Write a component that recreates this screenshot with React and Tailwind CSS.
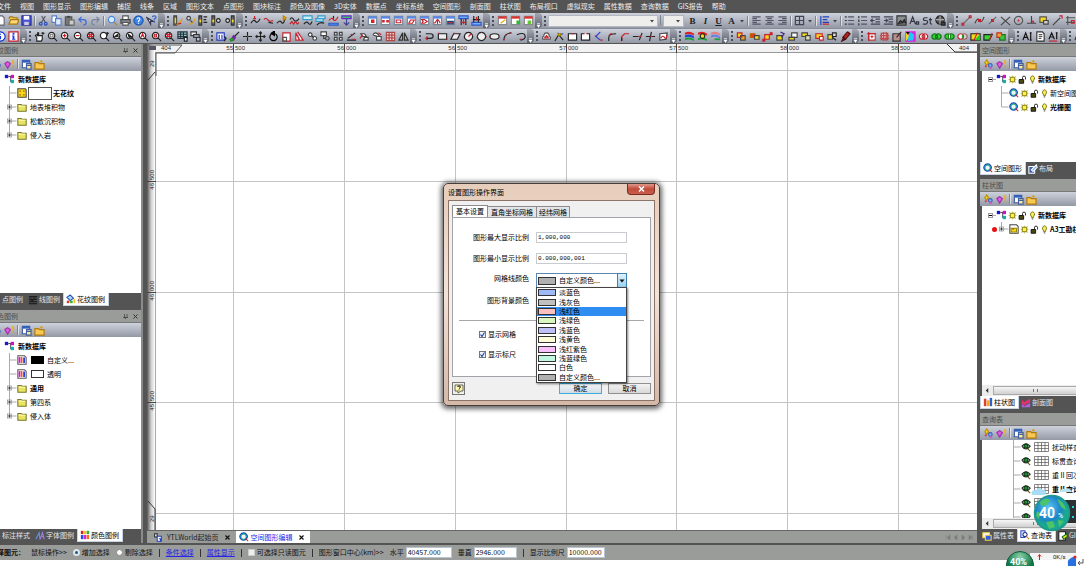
import React, { useState } from 'react';

// Each glyph is a list of [path, stroke, fill] on a 12x12 grid
const K = '#222';
const R = '#c8202c';
const G = '#1f9a2c';
const B = '#2f55c8';
const Y = '#f4d81c';
const N = 'none';

const LENS = 'M5 1.5a3.5 3.5 0 1 0 .01 0M7.6 7.6L11 11';
const WIN = 'M1.5 1.5h9v9h-9z';
const WINBAR = 'M1.5 1.5h9v2.5h-9z';

const GLYPHS = {
  newDoc: [['M2 1h6l2 2v8H2z', '#667', '#fff']],
  open: [['M1 4l1-2h3l1 1h4v3', '#a07818', '#f6c64a'], ['M1 10l2-5h9l-2 5z', '#a07818', '#ffd970']],
  save: [['M1 1h10v10H1z', '#2a2f9c', '#4b55d8'], ['M3 1h6v4H3z', N, '#fff'], ['M3.5 7.5h5V11h-5z', N, '#ccd']],
  cut: [['M4 1l4 7M8 1L4 8', '#556', N], ['M3 8a1.5 1.5 0 1 0 .01 0M8.5 8a1.5 1.5 0 1 0 .01 0', '#2a4fc0', N]],
  copy: [['M1 1h5v7H1z', '#5a7fc0', '#fff'], ['M5 4h6v7H5z', '#5a7fc0', '#dfeaff']],
  paste: [['M1.5 2h7v9h-7z', '#555', '#777'], ['M3.5 1h3v2h-3z', N, '#444'], ['M5.5 5.5h5.500v5.500h-5.500z', '#666', '#ccc']],
  undo: [['M2 5h5q3 0 3 3t-3 3M5 2L2 5l3 3', '#3a68d8', N]],
  redo: [['M10 5H5Q2 5 2 8t3 3M7 2l3 3-3 3', '#7a839a', N]],
  find: [['M5 1.5a3.5 3.5 0 1 0 .01 0', '#4a86d8', '#d8ecff'], ['M8 8l3 3', '#b08030', N]],
  print: [['M3 1h6v4H3z', '#555', '#fff'], ['M1 5h10v4H1z', '#444', '#8a8f98'], ['M3 8h6v3H3z', '#555', '#fff']],
  help: [['M6 1a5 5 0 1 0 .01 0', '#1f55b0', '#3a86e8'], ['M4.500 4.500q0-1.500 1.500-1.500t1.500 1.500q0 1-1.500 2v1M6 8.500v1', '#fff', N]],
  what: [['M1 3l4 7V7h3z', '#335', '#fff'], ['M7 2.500q0-1.500 2-1.500t2 1.500q0 1-2 2v1.500M9 7.500v1', '#2f66d0', N]],
  clip1: [['M2 1h3v10H2z', '#444', '#666'], ['M3 3h1.500v6H3z', N, Y], ['M5 10.500q4-1 6-7', '#e0a000', N], ['M6 10l4-1', R, N]],
  clip2: [['M4 1.500a2 2 0 1 0 .01 0', '#444', '#ddd'], ['M5 10q4 0 6-6', '#e0a000', N], ['M6 6l2 2', '#444', N]],
  alignA: [['M1 1h3v10H1z', '#333', '#666'], ['M1.500 5h2v3h-2z', N, Y], ['M6 2h4M6 5h3M6 8h4', '#222', N]],
  alignB: [['M1 1h3v10H1z', '#333', '#666'], ['M1.500 5h2v3h-2z', N, Y], ['M8 4a2 2 0 1 0 .01 0', '#222', '#ddd']],
  alignC: [['M8 1h3v10H8z', '#333', '#666'], ['M8.500 5h2v3h-2z', N, Y], ['M4 4a2 2 0 1 0 .01 0', '#222', '#ddd']],
  curveA: [['M1 9q3-5 5-2t5-3', K, N], ['M5 1v3M3.500 4h3', R, R]],
  curveB: [['M1 5q2-3 4 0t6 1', R, N], ['M6 8l5 1', K, N]],
  curveC: [['M1 9q3-4 5-1t4-4', K, N], ['M8 1l3 2-3 3z', '#c08000', '#f8c020']],
  curveD: [['M1 5q2-4 4 0t6-1', K, N], ['M1 10l2-3 2 3 2-3 2 3 2-2', R, N]],
  bandA: [['M1 1h10v4H1z', '#3a9ac8', '#c8f0f8'], ['M2 10q3-4 5-1t4-2', K, N]],
  bandB: [['M3 1h8v3H3zM1 4h8v3H1z', '#3a9ac8', '#b8e8f8'], ['M2 11q3-4 8-2', K, N]],
  bandC: [['M1 9h10v2H1z', B, '#5af'], ['M1 6q3-4 5-1t5-3', R, N], ['M6 1v3', K, N]],
  bandD: [['M1 1h10v3H1z', '#7020d0', '#30c860'], ['M6 4v6M3 8l3 3 3-3', '#404090', N]],
  winDot: [[WIN, '#789', '#fff'], [WINBAR, N, '#5a8ae8'], ['M5 5.500h2.500v2.500H5z', R, '#f02020']],
  winDots: [[WIN, '#789', '#fff'], [WINBAR, N, '#5a8ae8'], ['M3 6h1.500v1.500H3zM7.500 6H9v1.500H7.500z', R, '#f02020']],
  winRect: [[WIN, '#789', '#fff'], [WINBAR, N, '#5a8ae8'], ['M3.500 5.500h5v3h-5z', R, N]],
  winPar: [[WIN, '#789', '#fff'], [WINBAR, N, '#5a8ae8'], ['M5 5.500h4l-2 3.500H3z', R, N]],
  winPoly: [[WIN, '#789', '#fff'], [WINBAR, N, '#5a8ae8'], ['M3 5h3l3 2-3 2H3l1.500-2z', R, N]],
  winWave: [[WIN, '#789', '#fff'], [WINBAR, N, '#5a8ae8'], ['M2 9q2 0 3-3t4 3', R, N], ['M6 5v5', B, N]],
  winFill: [[WIN, '#789', '#fff'], [WINBAR, N, '#5a8ae8'], ['M3 7h6v2.500H3z', '#204080', '#c83030']],
  winCols: [['M1 1h10v3H1z', B, '#70b0ff'], ['M3.500 4v7M8.500 4v7', K, N], ['M6 5v5M3 8h6', R, N]],
  winRows: [['M1 8h10v3H1z', B, '#70b0ff'], ['M3 1v7M8 1v7M2 5h8', K, N], ['M6 2v4', R, N]],
  calPen: [[WIN, '#888', '#fff'], [WINBAR, N, '#e03030'], ['M4 9l5-4', '#e0a000', N]],
  calAdd: [[WIN, '#888', '#fff'], [WINBAR, N, '#e03030'], ['M7 6h4v4H7z', N, '#30b830']],
  calDot: [[WIN, '#888', '#fff'], [WINBAR, N, '#e03030'], ['M5 6h4v4H5z', N, '#60c830']],
  textL: [['M1.500 2h9M1.500 4h5M1.500 6h9M1.500 8h5M1.500 10h9', '#556', N]],
  textC: [['M1.500 2h9M3.500 4h5M1.500 6h9M3.500 8h5M1.500 10h9', '#556', N]],
  textR: [['M1.500 2h9M5.500 4h5M1.500 6h9M5.500 8h5M1.500 10h9', '#556', N]],
  borders: [['M1.500 1.500h9v9h-9zM6 1.500v9M1.500 6h9', '#445', N]],
  spacing: [['M2 1v10', '#2040c0', N], ['M4 2h7M4 5h5M4 8h7', '#2040c0', N], ['M4 10h7', R, N]],
  bullets: [['M1 2h2M1 6h2M1 10h2', '#333', N], ['M4.500 2h6.500M4.500 6h6.500M4.500 10h6.500', '#556', N]],
  numbers: [['M2 1v2.500M2 5v2.500M2 9v2.500', '#333', N], ['M4.500 2h6.500M4.500 6h6.500M4.500 10h6.500', '#556', N]],
  outdent: [['M1 2h10M6 4.500h5M6 7.500h5M1 10h10M5 6H1l2-2M1 6l2 2', '#445', N]],
  indent: [['M1 2h10M6 4.500h5M6 7.500h5M1 10h10M1 6h4L3 4M5 6L3 8', '#445', N]],
  image: [['M1 1h10v10H1z', '#333', '#8a8f94'], ['M2 10l3-4 2 2 2-3 2 4', '#222', '#444']],
  fontA: [['M1 10l3-8 3 8M2 7h4M8 7.500h2.500V10H8z', '#334', N]],
  fontS: [['M6 3H3Q1.500 3 1.500 4.500T4 6t2 2-2 2H1M9 3v6q0 1 2 1M7.500 5H11', '#334', N]],
  globe: [['M5.500 1a4.500 4.500 0 1 0 .01 0', '#222', '#555'], ['M1 5h9M5.500 1v9', '#aaa', N], ['M7 8h4v3H7z', '#222', '#444']],
  snapLine: [['M2 10l8-8', '#666', N], ['M1 9h2v2H1zM9 1h2v2H9z', R, N]],
  snapCurve: [['M1 9q3-7 5-3t5-4', '#444', N], ['M5 5h2v2H5z', R, N]],
  snapMid: [['M2 10l8-8', '#666', N], ['M5 5h2v2H5z', R, N]],
  snapX: [['M1 2l10 9M11 2L1 11', '#444', N]],
  snapCenter: [['M6 1.500a4.500 4.500 0 1 0 .01 0', '#555', N], ['M6 5v2M5 6h2', R, N]],
  snapPerp: [['M6 1v8M1 9h10', '#444', N], ['M6 7h2v2', R, N]],
  snapTag: [['M1 2h7v6H1z', '#555', Y], ['M5 6h5v4H5z', '#444', '#ccc']],
  snapTan: [['M1 11L9 3', '#444', N], ['M8 1h3v3', R, N]],
  snapPar: [['M1 3h10M1 8h10M3 1v10', '#555', N], ['M7 6h3v3H7z', R, N]],
  infoC: [['M6 1a5 5 0 1 0 .01 0', '#1030d8', '#fff'], ['M6 3v1M6 5.500v3.500', '#1030d8', N]],
  infoS: [['M1 1h10v10H1z', R, '#fff'], ['M5 2h2v2H5zM4.500 5H7v3.500h1v1H4.500v-1H5V6h-.5z', N, '#2040e0']],
  handPlus: [['M3 11V7L1.500 5l1-1L4 5V2h1v3h4v4l-1 2z', K, '#fff'], ['M8 2.500h3.500M9.700 1v3', K, N]],
  lensBox: [[LENS, K, '#fff'], ['M3.500 3.500h3v3h-3z', '#777', N]],
  lensPlus: [[LENS, K, '#fff'], ['M3 5h4M5 3v4', R, N]],
  lensMinus: [[LENS, K, '#fff'], ['M3 5h4', R, N]],
  lensGrid: [[LENS, K, '#fff'], ['M2 4h6M2 6h6M4 2v6M6 2v6', R, N]],
  lensMove: [[LENS, K, '#fff'], ['M9 1v4M7.500 2.500h3.500', K, N]],
  lensLeft: [[LENS, K, '#fff'], ['M2.500 6.500l4-3v2.500z', K, K]],
  lensRight: [[LENS, K, '#fff'], ['M3.500 3.500l4 3-3 .5z', K, K]],
  lensA: [[LENS, K, '#fff'], ['M3.300 7L5 3l1.700 4M4 5.500h2', R, N]],
  lensD: [[LENS, K, '#fff'], ['M3.500 3.500h2.500v3h-2.500z', R, '#f4b0b0']],
  tableSel: [['M1 1h10v7H1z', '#234', '#9cc8b8'], ['M1 3.500h10M1 6h10M4 1v7M7 1v7', '#234', N], ['M8 7h3v4H8z', '#222', '#fff']],
  layerSel: [['M1 1h6v4H1z', '#333', '#eee'], ['M4 4h6v3H4zM7 7h4v4H7z', '#333', '#bbd']],
  columns: [['M1 2h8v8H1z', '#2038c0', '#fff'], ['M3.500 4v5M6.500 4v5', '#2038c0', N], ['M9 6l2 2-2 3', K, N]],
  brush: [['M11 1L6 6', K, N], ['M5 5l2 2-2 3-2-2z', '#6a1fa0', '#8a30c0'], ['M1 9l3-1 1 2-3 1z', '#208a20', '#40c040']],
  cross: [['M6 1v10M1 6h10', K, N], ['M6 5v2', R, N]],
  move: [['M6 1v10M1 6h10M4.500 2.500L6 1l1.500 1.500M4.500 9.500L6 11l1.500-1.500M2.500 4.500L1 6l1.500 1.500M9.500 4.500L11 6 9.500 7.500', K, N]],
  rotate: [['M4 3a4 4 0 1 0 4 0', '#000', N], ['M7 0v5L3.500 2.500z', '#000', '#000']],
  scale: [['M2 2h8v9H2z', R, '#fff'], ['M2 7h4v4H2z', '#555', N]],
  mirror: [['M2 2v8h4zM4 1l6 9H7', R, '#fff']],
  link: [['M3.500 2a2 2 0 1 0 .01 0M8.500 6a2 2 0 1 0 .01 0', '#444', '#fff'], ['M5 5l2 2', K, N]],
  stack: [['M1 1h6v4H1z', '#444', '#fff'], ['M8 6a2 2 0 1 0 .01 0M4 5v3h2', '#444', N]],
  grid4: [['M1.500 1.500h3v3h-3zM7 1.500h3v3H7zM1.500 7h3v3h-3zM7 7h3v3H7z', '#444', '#ddd']],
  angle: [['M10 2L2 8M1 10h10', K, N], ['M5 4h2M7 9h3', R, N]],
  triA: [['M2 3h4l2 3H4zM6 7l4 0 0 3H5z', '#444', '#fff'], ['M1 8l3-4', R, N]],
  triB: [['M1 4q3-4 6 0t-6 0M5 6h5v4H5z', '#444', '#fff'], ['M7 2l3 2', R, N]],
  gridRed: [['M1.500 1.500h9v9h-9zM4.500 1.500v9M7.500 1.500v9M1.500 4.500h9M1.500 7.500h9', '#b04848', '#eed0d0']],
  flip: [['M5 2v8H1zM7 2v8h4z', '#333', '#aaa']],
  arcArrow: [['M2 3h5q3 0 3 2.500T7 8H3', K, N], ['M4 6L2 8l2 2', R, N]],
  rect: [['M1.500 3h9v6h-9z', K, '#eee'], ['M1 2.500h1.500M10 9h1.500', R, N]],
  para: [['M4 3h7L8 9H1z', K, '#eee'], ['M3.500 2.500h1.500M7.500 9h1', R, N]],
  circR: [['M6 1.500a4.500 4.500 0 1 0 .01 0', K, '#eee'], ['M6 6l3-3', R, N]],
  circ: [['M6 1.500a4.500 4.500 0 1 0 .01 0', K, '#eee'], ['M1 6h1M10.500 6h1M6 1v1', R, N]],
  oval: [['M6 3q5 0 5 3t-5 3-5-3 5-3', K, '#eee'], ['M1 6h1', R, N]],
  arc: [['M2 10Q2 3 10 2', K, N], ['M1.500 9.500h1.500M9 2h1.500M3.500 4.500H5', R, N]],
  hook: [['M2 4q8-3 9 1t-5 5', K, N], ['M5 9h2', R, N]],
  cloud: [['M2 9q-1-3 1-3 0-4 3-4t3 4q2 0 1 3z', '#555', '#eee'], ['M4 7.500h4L6 5z', R, N]],
  node: [['M1 11l4-7 5 6', K, N], ['M4 2l2 2 4-1', '#2a40c0', N], ['M5 3h2v2H5z', '#a08000', Y]],
  boxTop: [['M1.500 3h9v7h-9z', K, '#fff'], ['M5 3h2', R, N]],
  boxGap: [['M4.500 3h-3v7h9V3h-3', K, '#fff'], ['M4 3h1M7 3h1', R, N]],
  polyB: [['M8 1L3 6l5 4', '#2a40d8', N], ['M2 5.500h2M8 10h2.500', R, N]],
  fillet: [['M3 11V7q0-4 8-4', K, N], ['M3 5l3-2.500', R, N]],
  chamfer: [['M3 11V6l3-3h5', R, N], ['M3 11V7', K, N]],
  trim: [['M1 6h6M8 10l3-8', K, N], ['M7 6h3', R, N]],
  extend: [['M1 6h10M5 11L7 1', K, N], ['M6 6h2', R, N]],
  polyEdit: [['M2 3l8-1-1 7-7 1z', '#444', '#fff'], ['M3 8q2-4 4-1t3-3', R, N]],
  flagA: [['M1 2q5-3 10 1v2Q6 2 1 4z', N, '#e02020'], ['M1 5q5-3 10 1v2Q6 5 1 7z', N, '#2040e0'], ['M1 8q5-3 10 1v2Q6 8 1 10z', N, '#20a040']],
  flagB: [['M1 2q5-3 10 1v2Q6 2 1 4z', N, '#e02020'], ['M1 8q5-3 10 1v2Q6 8 1 10z', N, '#20a040'], ['M6 3a2.500 2.500 0 1 0 .01 0', K, Y]],
  flagC: [['M1 2q5-3 10 1v2Q6 2 1 4z', N, '#e88080'], ['M1 5q5-3 10 1v2Q6 5 1 7z', N, '#6a80e8'], ['M5 8h6v2H5z', N, '#20a040']],
  shapeA: [['M1.500 2h5v5h-5z', R, Y], ['M5 5h5v5H5z', '#444', '#f0a020'], ['M5 5h2v2H5z', N, R]],
  shapeB: [['M1.500 3h5v4h-5z', '#c06000', '#f03020'], ['M6 5h5v4H6z', '#444', Y]],
  shapeC: [['M3 4h5v5H3z', R, Y], ['M1 9h2v2H1zM9 2h2v2H9z', R, R]],
  shapeD: [['M2 5h6v5H2z', '#444', Y], ['M6 1l4 2-3 4', '#402080', N]],
  shapeE: [['M4 2h6v5H4z', '#444', '#fff'], ['M1 7h6v3H1z', '#444', Y]],
  shapeF: [['M1 2h6v4H1z', '#444', Y], ['M5 5h5v5H5z', '#444', '#ddb']],
  shapeG: [['M2 3h7v5H2z', R, Y], ['M6 6h4v4H6z', R, '#fff']],
  shapeH: [['M1 4h5v5H1z', '#444', Y], ['M6 2h4v4H6zM6 7l4 3', '#222', '#ddd']],
  pen: [['M10 1L4 8', '#8a1010', N], ['M8 1l3 2-5 6-3-2z', '#501010', '#c02020'], ['M4 7l2 2-4 2z', '#501010', '#333']],
  regA: [['M3 3h7v7H3z', '#b04040', '#fff'], ['M1 3h10M3 1v10M5 6h3M6.500 5v3', R, N]],
  regB: [['M2.500 2.500h7v7h-7z', '#b04040', '#e8c0c0'], ['M5 1v10M1 5h10M1 8h10M8 1v10', '#c05050', N]],
  regC: [['M1 3h8v8H1z', '#333', '#b89090'], ['M5 7l5-6', '#402020', N]],
  rainbow: [['M1 1h10v10H1z', '#e020e0', '#e020e0'], ['M1 1l5 5-5 5z', N, Y], ['M6 1l4 3-1 6-6 1 1-6z', N, '#20c8f8'], ['M1 1h4L3 4z', N, '#111']],
  venn: [['M4.500 3a3 3 0 1 0 .01 0M7.500 3a3 3 0 1 0 .01 0', R, '#fff'], ['M6 4v4', '#20a020', N]],
  vennG: [['M4 3a3 3 0 1 0 .01 0M8 3a3 3 0 1 0 .01 0', '#107010', '#30d030']],
  vennM: [['M4 3a3 3 0 1 0 .01 0M8 3a3 3 0 1 0 .01 0', '#107010', '#30d030'], ['M6 4v4', '#fff', N]],
  vennR: [['M8 3a3 3 0 1 0 .01 0', '#966', '#dcc'], ['M4 3a3 3 0 1 0 .01 0', R, '#fff'], ['M6 4v4', '#20a020', N]],
  splitY: [['M1 3h10v7H1z', '#222', Y], ['M11 3v7H5z', N, '#20d020'], ['M4 11l4-9', R, N]],
  splitG: [['M1 4h9l-3 6H1z', '#222', '#30d830'], ['M7 10l3-8', R, N]],
  merge: [['M1 2h5v5H1z', '#c03020', '#f8a030'], ['M6 4h4v6H4V7', '#207020', '#40c040']],
  textA: [['M1 10l3-8 3 8M2 7h4', '#111', N], ['M9.500 2v8M8.500 2h2M8.500 10h2', '#111', N]],
  page: [['M2 1h6l2 2v8H2z', '#333', '#fff'], ['M4 4h4M4 6h4M4 8h3', '#555', N]],
  textRed: [['M1 9l3-7 3 7M2 6.500h4M9.500 2v7M8.500 2h2', '#111', N], ['M1 11h9', R, N]],
  sparkle: [['M4 1l2 3-2 3-2-3z', '#c09000', Y], ['M2 7h2v2H2z', N, '#e03060'], ['M8 5a2 2 0 1 0 .01 0', '#4060c0', '#8ab0f0'], ['M7 9h3v2H7z', N, '#d060c0']],
  gem: [['M1 5l3-2 3 2-3 5z', '#a030b0', '#e060e0'], ['M9 1h2v5H9z', N, '#f0b010'], ['M9 8h2', '#e0a000', N]],
  calendar: [['M1.500 1.500h8v8h-8z', '#4060a0', '#fff'], ['M1.500 1.500h8v2.500h-8z', N, '#3060c0'], ['M6 5h5v6H6z', '#4060a0', '#ffe890'], ['M6 7h5', '#4060a0', N]],
  folderNew: [['M1 4h4l1 1h5v6H1z', '#b07a10', '#f8c850'], ['M8 1v3M6.500 2.500h3', '#e0a000', N]],
  tree: [['M1 1h4v4H1z', N, '#1818d0'], ['M5 3h3v6h1', '#555', N], ['M8 1h4v4H8z', N, '#d010c0'], ['M8 7h4v4H8z', N, '#10b0b8']],
  pattern: [['M1 1h9l1 1v9H1z', '#444', Y], ['M3 3h1.500v1.500H3zM7.500 3H9v1.500H7.500zM3 7.500h1.500V9H3zM7.500 7.500H9V9H7.500z', N, '#b04000']],
  folder: [['M1 3h4l1 1h5v7H1z', '#77752a', '#e8e460'], ['M2 5h8', '#fffcb0', N]],
  bars: [['M1 1h8l2 2v8H1z', '#555', '#fff'], ['M2 2.500h2v7H2z', N, '#e010d0'], ['M4.500 2.500h2v7h-2z', N, '#f05010'], ['M7.500 3h2v6.500h-2z', N, '#1030e0']],
  sun: [['M3 3h6v6H3z', '#777000', '#fff04a'], ['M2 2l1 1M10 2L9 3M2 10l1-1M10 10L9 9M6 1v1M6 10v1M1 6h1M10 6h1', '#a09a00', N]],
  lock: [['M1.500 6h6v5h-6z', '#111', '#4a4a10'], ['M6 6V3q0-1.500 2-1.500T10 3v3', '#222', N]],
  bulb: [['M6 1a3.500 3.500 0 0 1 1.500 6v1.500h-3V7A3.500 3.500 0 0 1 6 1', '#77700a', '#f8f060'], ['M5 10.500h2', '#333', N]],
  world: [['M5.500 1a4.500 4.500 0 1 0 .01 0', '#1848a0', '#30a0e0'], ['M2 4l5-2 2 3-3 4-3-1z', N, '#30c060'], ['M5.500 4a1.800 1.800 0 1 0 .01 0', '#fff', '#d8f4ff'], ['M8 8l3 3', R, N]],
  sheet: [['M1 1h8l2 2v8H1z', '#444', '#fff'], ['M2.500 5h6.500v4.500H2.500z', '#998800', Y], ['M4 6h2', '#c02020', N]],
  eye: [['M1 5q5-6 10 0-5 7-10 0', '#222', '#fff'], ['M6 2.500a2.500 2.500 0 1 0 .01 0', '#0a3010', '#208a30'], ['M8 8l3 3', '#665500', N]],
  home: [['M2 2h3v4H2z', '#222', '#fff'], ['M5 5h5v6H5z', '#2040c0', '#fff'], ['M7 8h2v3', '#2040c0', N]],
  bucket: [['M1 4l4-3 4 4-4 3z', '#2050b0', '#a8d0f8'], ['M1 8h3v3H1z', N, '#e03020'], ['M5 8h3v3H5z', N, '#30b030'], ['M9 6h2v5H9z', N, '#f8c020']],
  lines: [['M1 2h10M1 5h10M1 8h10M1 10.500h10', '#111', N], ['M2 3.500h2M6 3.500h3M3 6.500h4', '#222', N]],
  fontBlue: [['M1 10l4-8 1 8', '#5a96f8', N], ['M6 10l3-8 2 8M7 7h4', '#a880f0', N]],
  palette: [['M1 1h3v4H1z', N, '#e02020'], ['M4.500 1h3v4h-3z', N, '#f8c020'], ['M8 1h3v4H8z', N, '#30b030'], ['M1 6h3v5H1z', N, '#2050f0'], ['M4.500 6h3v5h-3z', N, '#e020d0'], ['M8 6h3v5H8z', N, '#f07020']],
  layout: [['M1 3h7v8H1z', '#fff', '#3a60b0'], ['M4 7l6-6 1 3-5 5z', '#fff', '#90b8f0']],
  barChart: [['M1 2h3v9H1z', N, '#e04030'], ['M4.500 4h3v7h-3z', N, '#f8a820'], ['M8 1h3v10H8z', N, '#3060d0']],
  profile: [['M1 2l3 3 3-2 4-2v4l-4 2-3 2-3-2z', N, '#e83070'], ['M1 7l3 3 3-2 4-2v5H1z', N, '#b060e0']],
  tabTable: [['M1 2h8v6H1z', '#f8d040', '#fff'], ['M4 5h7v6H4z', '#f8d040', '#3060e0']],
  query: [['M1 1h5v8H1z', '#3050c0', '#d8e4ff'], ['M6 3a2.500 2.500 0 1 0 .01 0', '#203080', '#fff'], ['M8 8l3 3', '#d08000', N]],
  gisTab: [['M1 1h8v10H1z', '#222', '#fff'], ['M5 7l6-4v4l-4 3z', '#106010', '#d8e020']],
};

function Glyph({ name, className = 'size-3' }) {
  return (
    <svg viewBox="0 0 12 12" className={`shrink-0 ${className}`} aria-hidden="true">
      {GLYPHS[name].map(([d, stroke, fill], i) => (
        <path key={i} d={d} stroke={stroke} fill={fill} strokeWidth="1.25" />
      ))}
    </svg>
  );
}

const MENU = ['文件', '视图', '图形显示', '图形编辑', '捕捉', '线条', '区域', '图形文本', '点图形', '图块标注', '颜色及图像', '3D实体', '数据点', '坐标系统', '空间图形', '剖面图', '柱状图', '布局视口', '虚拟现实', '属性数据', '查询数据', 'GIS报告', '帮助'];

const TOP_GROUPS = [
  ['newDoc', 'open', 'save', '|', 'cut', 'copy', 'paste', 'undo', 'redo', '|', 'find', 'print', 'help', 'what'],
  ['clip1', 'clip2', 'alignA', 'alignB', 'alignC'],
  ['curveA', 'curveB', 'curveC', 'curveD', 'bandA', 'bandB', 'bandC', 'bandD'],
  ['winDot', 'winDots', 'winRect', 'winPar', 'winPoly', 'winWave', 'winFill', 'winCols', 'winRows'],
  ['calPen', 'calAdd', 'calDot'],
];
const SNAP_GROUP = ['snapLine', 'snapCurve', 'snapMid', 'snapX', 'snapCenter', 'snapPerp', 'snapTag', 'snapTan', 'snapPar'];

const BOTTOM_GROUPS = [
  ['infoC', 'infoS'],
  ['handPlus', 'lensBox', 'lensPlus', 'lensMinus', 'lensGrid', 'lensMove', 'lensLeft', 'lensRight', 'lensA', 'lensD', 'lensGrid', 'tableSel', 'layerSel'],
  ['columns', 'brush', 'cross', 'move', 'rotate', 'scale', 'mirror', 'link', 'stack', 'grid4', 'angle', 'triA', 'triB', 'gridRed', 'flip'],
  ['arcArrow', 'rect', 'para', 'circR', 'circ', 'oval', 'arc', 'hook'],
  ['cloud', 'node', 'boxTop', 'boxGap', 'polyB', 'fillet', 'chamfer', 'trim', 'extend', 'polyEdit'],
  ['flagA', 'flagB', 'flagC'],
  ['shapeA', 'shapeB', 'shapeC', 'shapeD', 'shapeE', 'shapeF', 'shapeG', 'shapeH', 'pen'],
  ['regA', 'regB', 'regC', 'rainbow', 'venn', 'vennG', 'vennM', 'vennR', 'splitY', 'splitG', 'merge'],
  ['textA', 'page', 'textRed'],
  ['fontA'],
];

function Grip() {
  return <span className="mx-0.5 h-2.5 w-0.5 shrink-0 border-l-2 border-dotted border-[#4a4f5a]" />;
}

function GroupEnd() {
  return (
    <span className="flex h-full w-[7px] shrink-0 items-end justify-center rounded-r-sm bg-linear-to-b from-[#a4a9b4] to-[#5c616c]">
      <svg viewBox="0 0 5 5" className="size-[5px]"><path d="M1 .5h3M1 2h3L2.500 4.500z" stroke="#fff" strokeWidth=".6" fill="#fff" /></svg>
    </span>
  );
}

function Divider() {
  return <span className="mx-px h-2.5 w-0.5 shrink-0 border-l border-[#7e8490] bg-white/60" />;
}

function ToolButton({ name }) {
  return (
    <button aria-label={name} className="flex w-[13px] shrink-0 justify-center">
      <Glyph name={name} className="size-[11px]" />
    </button>
  );
}

function ToolGroup({ items, first }) {
  return (
    <div className="flex h-full shrink-0 items-center">
      {!first && <Grip />}
      {items.map((name, i) => name === '|' ? <Divider key={i} /> : <ToolButton key={i} name={name} />)}
      <GroupEnd />
    </div>
  );
}

function Caret() {
  return <svg viewBox="0 0 8 4" className="h-1 w-2 shrink-0"><path d="M2 1h4L4 3.500z" fill="#444" /></svg>;
}

function PlainSelect({ label, className }) {
  return (
    <div className={`relative flex h-3 shrink-0 items-center ${className}`}>
      <select aria-label={label} className="size-full appearance-none rounded-none border border-[#b4b8c0] bg-[#eeeeec] text-[7px]" />
      <span className="pointer-events-none absolute right-0.5"><Caret /></span>
    </div>
  );
}

function FormatGroup() {
  return (
    <div className="flex h-full shrink-0 items-center">
      <Grip />
      <PlainSelect label="字体" className="w-[110px]" />
      <span className="mx-px"><Divider /></span>
      <PlainSelect label="字号" className="w-[21px]" />
      <div className="ml-0.5 flex font-['Liberation_Serif',serif] text-[9px] leading-3 font-bold text-[#222]">
        <button className="w-[13px]">B</button>
        <button className="w-[13px] italic">I</button>
        <button className="w-[13px] underline">U</button>
        <button className="w-[13px]">A</button>
      </div>
      <Caret />
      <Divider />
      {['textL', 'textC', 'textR'].map(n => <ToolButton key={n} name={n} />)}
      <Divider />
      <ToolButton name="borders" />
      <Caret />
      <Divider />
      <ToolButton name="spacing" />
      <Caret />
      <Divider />
      {['bullets', 'numbers', 'outdent', 'indent', 'image', 'fontA', 'fontS', 'globe'].map(n => <ToolButton key={n} name={n} />)}
      <GroupEnd />
    </div>
  );
}

const BAR = 'flex h-[15px] items-center overflow-hidden bg-linear-to-b from-[#cdd2dc] to-[#9499a6]';

function PanelHead({ title, closable }) {
  return (
    <>
      <div className="flex h-3 shrink-0 items-center bg-[#9a9c9a] pl-0.5 text-[#4c4e4c]">
        <h2 className="flex-1 whitespace-nowrap">{title}</h2>
        {closable && (
          <div className="flex gap-[5px] pr-[3px]">
            <button aria-label="固定"><svg viewBox="0 0 5 5" className="size-[5px]"><path d="M1.500 0v3.500h2.500V0M0 3.500h5M2.500 3.500V5" stroke="#444" strokeWidth=".8" fill="none" /></svg></button>
            <button aria-label="关闭"><svg viewBox="0 0 5 5" className="size-[5px]"><path d="M.5.5l4 4M4.500.5l-4 4" stroke="#333" /></svg></button>
          </div>
        )}
      </div>
      <div className={`${BAR} shrink-0 border-t border-[#777] px-0.5`}>
        <ToolButton name="sparkle" />
        <ToolButton name="gem" />
        <Divider />
        <ToolButton name="calendar" />
        <ToolButton name="folderNew" />
      </div>
    </>
  );
}

// Tree connector cell, with an optional expand box
function Branch({ box, last }) {
  return (
    <svg viewBox="0 0 11 14" className="h-3.5 w-[11px] shrink-0">
      <path d={last ? 'M3.500 0v7h7' : 'M3.500 0v14M3.500 7h7'} stroke="#aaa" fill="none" />
      {box && <rect x="1.500" y="5" width="4" height="4" fill="#fff" stroke="#888" strokeWidth=".7" />}
      {box && <path d="M2 7h3M3.500 5.500v3" stroke="#222" strokeWidth=".8" />}
    </svg>
  );
}

function LeftRoot() {
  return (
    <li className="flex h-3.5 items-center gap-1 pl-1 font-bold">
      <Glyph name="tree" className="size-2.5" />新数据库
    </li>
  );
}

function FolderRow({ label, bold, last }) {
  return (
    <li className={`flex h-3.5 items-center pl-1.5 ${bold ? 'font-bold' : ''}`}>
      <Branch box last={last} />
      <Glyph name="folder" className="mr-[3px] size-2.5" />{label}
    </li>
  );
}

function TabStrip({ tabs, active }) {
  return (
    <div className="flex h-3.5 shrink-0 items-start overflow-hidden bg-[#545454] text-[#e4e4e4]">
      {tabs.map(([icon, label]) => (
        <button key={label} className={`flex h-[13px] shrink-0 items-center gap-px px-0.5 pr-[3px] whitespace-nowrap ${label === active ? 'border border-t-0 border-[#c8d4e4] bg-white text-black' : ''}`}>
          {icon && <Glyph name={icon} className="size-2.5" />}
          {label}
        </button>
      ))}
    </div>
  );
}

function LeftDock() {
  return (
    <aside className="flex w-[143px] shrink-0 flex-col border-r-2 border-[#8a8a8a] bg-[#545454]">
      <div className="-ml-3 flex min-h-0 flex-[263] flex-col">
        <PanelHead title="花纹图例" closable />
        <ul className="ml-3 min-h-0 flex-1 overflow-hidden bg-white pt-px">
          <LeftRoot />
          <li className="flex h-3.5 items-center pl-1.5 font-bold">
            <Branch />
            <Glyph name="pattern" className="size-2.5" />
            <span className="mx-px h-[13px] w-6 border border-[#555] bg-white" />无花纹
          </li>
          <FolderRow label="地表堆积物" />
          <FolderRow label="松散沉积物" />
          <FolderRow label="侵入岩" last />
        </ul>
        <div className="ml-3">
          <TabStrip tabs={[[null, '点图例'], ['lines', '线图例'], ['bucket', '花纹图例']]} active="花纹图例" />
        </div>
      </div>
      <div className="-ml-3 mt-[3px] flex min-h-0 flex-[233] flex-col">
        <PanelHead title="颜色图例" closable />
        <ul className="ml-3 min-h-0 flex-1 overflow-hidden bg-white pt-0.5">
          <LeftRoot />
          <li className="flex h-3.5 items-center pl-1.5">
            <Branch />
            <Glyph name="bars" className="size-2.5" />
            <span className="mr-[3px] ml-1 h-2 w-[13px] bg-black" />自定义...
          </li>
          <li className="flex h-3.5 items-center pl-1.5">
            <Branch />
            <Glyph name="bars" className="size-2.5" />
            <span className="mr-[3px] ml-1 h-2 w-[13px] border border-[#333] bg-white" />透明
          </li>
          <FolderRow label="通用" bold />
          <FolderRow label="第四系" />
          <FolderRow label="侵入体" last />
        </ul>
        <div className="ml-3">
          <TabStrip tabs={[[null, '标注样式'], ['fontBlue', '字体图例'], ['palette', '颜色图例']]} active="颜色图例" />
        </div>
      </div>
    </aside>
  );
}

function Flags() {
  return (
    <span className="flex shrink-0 items-center gap-px pr-px">
      {['sun', 'lock', 'bulb'].map(n => <Glyph key={n} name={n} className="size-[9px]" />)}
    </span>
  );
}

function RightRoot() {
  return (
    <li className="flex h-3.5 items-center pl-1.5 font-bold whitespace-nowrap">
      <span className="flex size-[5px] shrink-0 items-center border border-[#999]"><i className="h-px w-full bg-black" /></span>
      <span className="h-px w-[3px] shrink-0 bg-[#aaa]" />
      <Glyph name="tree" className="mr-0.5 size-2.5" />
      <Flags />新数据库
    </li>
  );
}

function HScroll() {
  return (
    <div className="ml-0.5 flex h-[11px] shrink-0 items-center gap-1 bg-[#ececec] pl-[3px]">
      <svg viewBox="0 0 4 6" className="h-[5px] w-1"><path d="M3.500 0v6L.5 3z" fill="#333" /></svg>
      <span className="flex h-[9px] flex-1 items-center justify-center border border-r-0 border-[#aaa] bg-linear-to-b from-[#f6f6f6] to-[#d0d0d0]">
        <i className="h-[3px] w-[5px] border-x border-[#777]" />
      </span>
    </div>
  );
}

const QUERIES = ['扰动样查询', '标贯查询', '重Ⅱ回次', '重Ⅱ查询', '重Ⅱ统计', '静探查询'];

function RightDock() {
  return (
    <aside className="flex w-[99px] shrink-0 flex-col overflow-hidden border-l-[3px] border-[#545454] bg-[#545454]">
      <div className="flex min-h-0 flex-[132] flex-col">
        <PanelHead title="空间图形" />
        <ul className="ml-0.5 min-h-0 flex-1 overflow-hidden bg-white pt-px">
          <RightRoot />
          {['新空间图形', '光栅图'].map((t, i) => (
            <li key={t} className={`flex h-3.5 items-center pl-4 whitespace-nowrap ${i ? 'font-bold' : ''}`}>
              <Branch last={i === 1} />
              <Glyph name="world" className="mr-px size-2.5" />
              <Flags />{t}
            </li>
          ))}
        </ul>
        <TabStrip tabs={[['world', '空间图形'], ['layout', '布局']]} active="空间图形" />
      </div>
      <div className="mt-[3px] flex min-h-0 flex-[231] flex-col">
        <PanelHead title="柱状图" />
        <ul className="ml-0.5 min-h-0 flex-1 overflow-hidden bg-white pt-0.5">
          <RightRoot />
          <li className="flex h-3.5 items-center pl-2.5 font-bold whitespace-nowrap">
            <i className="mr-px size-[5px] shrink-0 rounded-full bg-[#e81010]" />
            <Branch box last />
            <Glyph name="sheet" className="mr-px size-2.5" />
            <Flags />A3工勘柱
          </li>
        </ul>
        <HScroll />
        <TabStrip tabs={[['barChart', '柱状图'], ['profile', '剖面图']]} active="柱状图" />
      </div>
      <div className="mt-[3px] flex min-h-0 flex-[130] flex-col">
        <PanelHead title="查询表" />
        <ul className="ml-0.5 min-h-0 flex-1 overflow-hidden bg-white">
          {QUERIES.map((q, i) => (
            <li key={q} className={`flex h-3.5 items-center pl-7 whitespace-nowrap ${i === 3 ? 'font-bold' : ''}`}>
              <Branch />
              <Glyph name="eye" className="size-2.5" />
              <svg viewBox="0 0 15 10" className="mx-[3px] h-2.5 w-[15px] shrink-0">
                <path d="M.5.5h14v9H.5zM4 .5v9M7.500.5v9M11 .5v9M.5 3.500h14M.5 6.500h14" stroke="#555" strokeWidth=".7" fill="#fff" />
              </svg>
              {q}
            </li>
          ))}
        </ul>
        <HScroll />
        <TabStrip tabs={[['tabTable', '属性表'], ['query', '查询表'], ['gisTab', 'GIS报告']]} active="查询表" />
      </div>
    </aside>
  );
}

const COLS = [[87, '55', '500'], [198, '56', '000'], [309, '56', '500'], [420, '57', '000'], [530, '57', '500'], [641, '58', '000'], [752, '58', '500']];
const ROWS = [[137, '46', '500'], [248, '46', '000'], [358, '45', '500']];

// Coordinate grid with rulers along the top and left edges
function MapView() {
  return (
    <svg className="min-h-0 w-full flex-1 bg-white font-['Liberation_Sans',sans-serif] text-[6px]" role="img" aria-label="坐标网格">
      <defs>
        <linearGradient id="ruler">
          <stop offset="0" stopColor="#555" /><stop offset=".5" stopColor="#ccc" /><stop offset="1" stopColor="#fff" />
        </linearGradient>
      </defs>
      <rect width="100%" height="9" fill="#f2f2f2" />
      <rect y="8" width="100%" height="1" fill="#999" />
      <rect width="8" height="100%" fill="url(#ruler)" />
      <rect x="8" y="9" width="1" height="100%" fill="#aaa" />
      {COLS.map(([x, a, b]) => (
        <g key={x}>
          <rect x={x - 1} y="9" width="1" height="100%" fill="#c4c4c4" />
          <rect x={x - 1} width="1" height="9" fill="#444" />
          <text x={x - 1} y="6" textAnchor="end" fill="#333">{a}</text>
          <text x={x + 1} y="6" fill="#333">{b}</text>
        </g>
      ))}
      {[26, 137, 248, 358, 469].map(y => <rect key={y} x="9" y={y} width="100%" height="1" fill="#c4c4c4" />)}
      {ROWS.map(([y, a, b]) => (
        <g key={y}>
          <rect y={y} width="9" height="1" fill="#444" />
          <text transform={`translate(7 ${y - 1}) rotate(-90)`} fill="#222">{b}</text>
          <text transform={`translate(7 ${y + 2}) rotate(-90)`} textAnchor="end" fill="#222">{a}</text>
        </g>
      ))}
      <path d="M9 32V9h19l7-8H1" fill="none" stroke="#555" />
      <path d="M8 28L1 36M1 457l7 8v21" fill="none" stroke="#333" />
      <rect x="2" y="2" width="7" height="4" fill="#556" />
      <text x="14" y="6" fill="#222">404</text>
      <text transform="translate(7 23) rotate(-90)" fill="#222">29</text>
      <text transform="translate(7 478) rotate(-90)" fill="#222">29</text>
      <path d="M800 0l8 8h22" fill="none" stroke="#333" />
      <text x="812" y="6" fill="#222">404</text>
    </svg>
  );
}

function Workspace() {
  return (
    <main className="flex min-w-0 flex-1 flex-col border-l-4 border-[#545454]">
      <MapView />
      <div className="flex h-[13px] shrink-0 items-center border-t border-[#666] bg-[#9a9c9a] text-[#222]">
        <button className="flex items-center gap-1 pl-1.5"><Glyph name="home" className="size-2.5" />YTLWorld起始页</button>
        <CloseX />
        <div className="flex h-full items-center bg-white">
          <button className="flex items-center gap-0.5 pl-[3px] text-[#2626e8]"><Glyph name="world" className="size-2.5" />空间图形编辑</button>
          <CloseX />
        </div>
        <svg viewBox="0 0 28 5" className="mr-1 ml-auto h-[5px] w-7">
          <path d="M1 0v5M5 0v5L2 2.500zM12 0v5L9 2.500zM17 0v5l3-2.500zM24 0v5l3-2.500zM27.500 0v5" fill="#7a7c7a" stroke="#7a7c7a" strokeWidth=".5" />
        </svg>
      </div>
    </main>
  );
}

function CloseX() {
  return (
    <button aria-label="关闭" className="px-1.5">
      <svg viewBox="0 0 5 5" className="size-[5px]"><path d="M.5.5l4 4M4.500.5l-4 4" stroke="#111" strokeWidth="1.200" /></svg>
    </button>
  );
}

const COLORS = [['淡蓝色', '#9fb8f8'], ['浅灰色', '#c0c0c0'], ['浅红色', '#f8c0c0'], ['浅绿色', '#d8f8c0'], ['浅蓝色', '#c0c0f8'], ['浅黄色', '#fcfcd8'], ['浅红紫色', '#f8c0f8'], ['浅蓝绿色', '#c0f8e0'], ['白色', '#ffffff'], ['自定义颜色...', '#b0b0b0']];

function SettingsDialog() {
  const [picked, setPicked] = useState('浅红色');

  return (
    <section role="dialog" aria-label="设置图形操作界面" className="absolute top-[183px] left-[443px] flex h-[223px] w-[217px] flex-col rounded-[5px] border border-[#4a3c38] bg-linear-to-b from-[#e6cdbb] via-[#f3e2d6] to-[#d4b8a8] px-1 pb-1 text-black shadow-[0_1px_5px_2px_rgba(0,0,0,0.6)]">
      <header className="flex h-4 shrink-0 items-center">
        <h1 className="flex-1">设置图形操作界面</h1>
        <button aria-label="关闭" className="flex h-[11px] w-7 items-center justify-center self-start rounded-b-sm border border-t-0 border-[#7a2a20] bg-linear-to-b from-[#e0978a] via-[#c04a3a] to-[#c8604c]">
          <svg viewBox="0 0 7 6" className="h-1.5 w-[7px]"><path d="M1 .5l5 5M6 .5l-5 5" stroke="#fff" strokeWidth="1.500" /></svg>
        </button>
      </header>
      <div className="flex min-h-0 flex-1 flex-col border border-[#8a7468] bg-[#f0f0f0] px-[3px] pt-1">
        <div role="tablist" className="flex h-3 shrink-0 items-end">
          <button role="tab" className="h-full border border-b-0 border-[#8a8c90] bg-white px-[3px]">基本设置</button>
          <button role="tab" className="h-[11px] border border-b-0 border-l-0 border-[#8a8c90] bg-[#e4e4e4] px-[3px]">直角坐标网格</button>
          <button role="tab" className="h-[11px] border border-b-0 border-l-0 border-[#8a8c90] bg-[#e4e4e4] px-0.5">经纬网格</button>
        </div>
        <div className="flex h-[160px] shrink-0 flex-col border border-[#a0a4a8] bg-white px-1.5 pt-3.5">
          <div className="grid grid-cols-[70px_91px] items-center gap-x-[7px]">
            <label htmlFor="max" className="flex h-[21px] items-start justify-end">图形最大显示比例</label>
            <input id="max" defaultValue="1,000,000" className="h-[11px] self-start border border-[#c8ccd0] px-px font-['Liberation_Mono',monospace] text-[6px]" />
            <label htmlFor="min" className="flex h-5 items-start justify-end">图形最小显示比例</label>
            <input id="min" defaultValue="0.000,000,001" className="h-[11px] self-start border border-[#c8ccd0] px-px font-['Liberation_Mono',monospace] text-[6px]" />
            <label htmlFor="line" className="flex h-[22px] items-start justify-end">网格线颜色</label>
            <div className="relative self-start">
              <select id="line" className="h-[15px] w-full appearance-none rounded-none border border-[#5a88b0] bg-white pl-[22px] text-[7px]">
                <option>自定义颜色...</option>
              </select>
              <i className="pointer-events-none absolute top-1 left-0.5 h-2 w-[18px] border border-[#333] bg-[#b0b0b0]" />
              <span className="pointer-events-none absolute top-0 right-0 flex h-[15px] w-2.5 items-center justify-center border border-[#3c7fb1] bg-linear-to-b from-[#e0f2fc] to-[#98d0f0]">
                <svg viewBox="0 0 6 4" className="h-1 w-1.5"><path d="M.5.5h5L3 3.500z" fill="#111" /></svg>
              </span>
              <ul role="listbox" aria-label="网格线颜色" className="absolute top-3.5 left-0 flex h-24 w-full flex-col border border-[#444] bg-white shadow-[1px_1px_2px_rgba(0,0,0,0.5)]">
                {COLORS.map(([name, color]) => (
                  <li
                    key={name} role="option" aria-selected={picked === name} onClick={() => setPicked(name)}
                    className={`flex flex-1 items-center gap-[3px] pl-px leading-[9px] ${picked === name ? 'bg-[#2f8cf0]' : ''}`}
                  >
                    <i className="h-[7px] w-[18px] border border-[#333]" style={{ backgroundColor: color }} />
                    {name}
                  </li>
                ))}
              </ul>
            </div>
            <span className="flex h-[25px] items-start justify-end">图形背景颜色</span>
          </div>
          <hr className="border-[#a8a8a8]" />
          <div className="flex flex-col items-start gap-[9px] pt-2 pl-5">
            {['显示网格', '显示标尺'].map(t => (
              <label key={t} className="flex h-[11px] items-center gap-0.5">
                <CheckBox />{t}
              </label>
            ))}
          </div>
        </div>
        <footer className="flex flex-1 items-center">
          <button aria-label="帮助" className="flex size-[13px] items-center justify-center border border-[#777] bg-[#f0f0e8]">
            <svg viewBox="0 0 10 10" className="size-2.5"><path d="M1 1h8v6H7l-3 2V7H1z" fill="#fffbb0" stroke="#444" strokeWidth=".8" /><path d="M3.500 3q0-1 1.500-1t1.500 1q0 .8-1.500 1.500M5 5.500v1" stroke="#112" fill="none" /></svg>
          </button>
          <button className="ml-auto h-[11px] w-[43px] border border-[#3cb0e0] bg-linear-to-b from-[#f4f8fa] to-[#d0dce4] leading-[9px]">确定</button>
          <button className="ml-1.5 h-[11px] w-[43px] border border-[#909090] bg-linear-to-b from-[#f4f4f4] to-[#d8d8d8] leading-[9px]">取消</button>
        </footer>
      </div>
    </section>
  );
}

function CheckBox() {
  return (
    <span className="relative flex">
      <input type="checkbox" defaultChecked className="peer size-[7px] appearance-none border border-[#777] bg-[#eef2f8]" />
      <svg viewBox="0 0 7 7" className="pointer-events-none absolute inset-0 hidden size-[7px] peer-checked:block"><path d="M1.500 3.500l1.500 2 2.500-4" stroke="#1c3f9c" strokeWidth="1.100" fill="none" /></svg>
    </span>
  );
}

function StatusBar() {
  const bar = <i className="h-2 w-px shrink-0 bg-[#333]" />;
  const field = 'h-[11px] border border-[#b8c4d0] bg-white px-px text-[7px]';
  const radio = 'size-[7px] appearance-none rounded-full border border-[#888] bg-white checked:border-2 checked:border-[#dfe6ea] checked:bg-[#185a90]';

  return (
    <footer className="-ml-2.5 flex h-[17px] shrink-0 items-center gap-1.5 border-t-2 border-[#545454] bg-[#9a9c9a] whitespace-nowrap text-[#111]">
      <b>选择图元：</b>
      <span>鼠标操作&gt;&gt;</span>
      <label className="flex items-center gap-0.5"><input type="radio" name="pick" defaultChecked className={radio} />增加选择</label>
      <label className="flex items-center gap-0.5"><input type="radio" name="pick" className={radio} />剔除选择</label>
      {bar}
      <a href="#filter" className="text-[#2626e8] underline">条件选择</a>
      {bar}
      <a href="#attrs" className="text-[#2626e8] underline">属性显示</a>
      {bar}
      <label className="flex items-center gap-0.5"><input type="checkbox" className="size-[7px] appearance-none border border-[#ccc] bg-[#eee]" />可选择只读图元</label>
      {bar}
      <span>图形窗口中心(km)&gt;&gt;</span>
      <label className="flex items-center gap-0.5">水平<input defaultValue="40457.000" className={`w-[46px] ${field}`} /></label>
      <label className="flex items-center gap-0.5">垂直<input defaultValue="2946.000" className={`w-[43px] ${field}`} /></label>
      {bar}
      <label className="flex items-center gap-0.5">显示比例尺<input defaultValue="10000.000" className={`w-[38px] ${field}`} /></label>
    </footer>
  );
}

// Floating memory gauges that sit over the lower right corner
function Gauges() {
  return (
    <svg viewBox="0 0 80 80" className="absolute right-0 bottom-0 size-20 font-['Roboto',sans-serif]" role="img" aria-label="40%">
      <defs>
        <radialGradient id="earth" cx=".4" cy=".35"><stop offset="0" stopColor="#5cc8f4" /><stop offset=".7" stopColor="#1c84c8" /><stop offset="1" stopColor="#18a890" /></radialGradient>
        <radialGradient id="leaf" cx=".5" cy=".2"><stop offset="0" stopColor="#8cd0a8" /><stop offset="1" stopColor="#107848" /></radialGradient>
      </defs>
      <path d="M60 14h12v23H60z" fill="#2a3034" />
      <path d="M68 21h2M68 31h2" stroke="#20d8d0" strokeWidth="2" />
      <circle cx="48" cy="27" r="17.500" fill="url(#earth)" stroke="#20988c" strokeWidth="1.500" />
      <path d="M36 16q6-6 10-2l-3 5-6 1zM53 13q8 3 9 11l-5-3zM42 36l7-1 2 6-6 2zM54 34l6 1-5 6zM33 25l3 2-1 6-3-3z" fill="#4cc468" />
      <path d="M28 9q-2-5 4-5 3-4 7 0 5 0 2 5z" fill="#a8dcf4" />
      <path d="M56 6q1-4 5-3 5-2 7 3z" fill="#b8e4f8" />
      <text x="35" y="32" fontSize="14" fontWeight="700" fill="#fff">40</text>
      <text x="54" y="32" fontSize="7" fontWeight="700" fill="#d8f0ff">%</text>
      <path d="M26 67h46v7H26z" fill="#f4f4f4" />
      <circle cx="16" cy="79" r="13.500" fill="url(#leaf)" stroke="#0c5c38" />
      <text x="6" y="79" fontSize="9" fontWeight="700" fill="#fff">40%</text>
      <path d="M35.500 74v-5M34 70.500l1.500-2 1.500 2" stroke="#e01818" fill="none" />
      <text x="49" y="73" fontSize="6" fill="#222">0K/s</text>
      <path d="M72 70v10h-8q-2-8 8-10" fill="#2a70e0" />
      <circle cx="71" cy="71" r="1.500" fill="#e02020" />
      <path d="M79 73v4h-5M76 75l-2 2 2 2" stroke="#555" fill="none" />
    </svg>
  );
}

export default function App() {
  return (
    <div className="relative flex h-screen flex-col overflow-hidden bg-white pr-2 pb-1.5 font-['Noto_Sans_CJK_SC',sans-serif] text-[7px] leading-[11px] text-black">
      <nav className="flex h-[13px] shrink-0 items-center overflow-hidden bg-[#545454] text-[#f0f0f0]">
        <div className="-ml-[3px] flex gap-[9px]">
          {MENU.map(m => <button key={m} className="shrink-0 whitespace-nowrap">{m}</button>)}
        </div>
      </nav>
      <div className={BAR}>
        <div className="-ml-1.5 flex h-full">
          {TOP_GROUPS.map((g, i) => <ToolGroup key={i} items={g} first={i === 0} />)}
          <FormatGroup />
          <ToolGroup items={SNAP_GROUP} />
        </div>
      </div>
      <div className={`${BAR} border-t border-[#878c98]`}>
        <div className="-ml-1.5 flex h-full">
          {BOTTOM_GROUPS.map((g, i) => <ToolGroup key={i} items={g} first={i === 0} />)}
        </div>
      </div>
      <div className="flex min-h-0 flex-1 overflow-hidden border-t border-[#545454]">
        <LeftDock />
        <Workspace />
        <RightDock />
      </div>
      <div className="overflow-hidden"><StatusBar /></div>
      <SettingsDialog />
      <Gauges />
    </div>
  );
}
